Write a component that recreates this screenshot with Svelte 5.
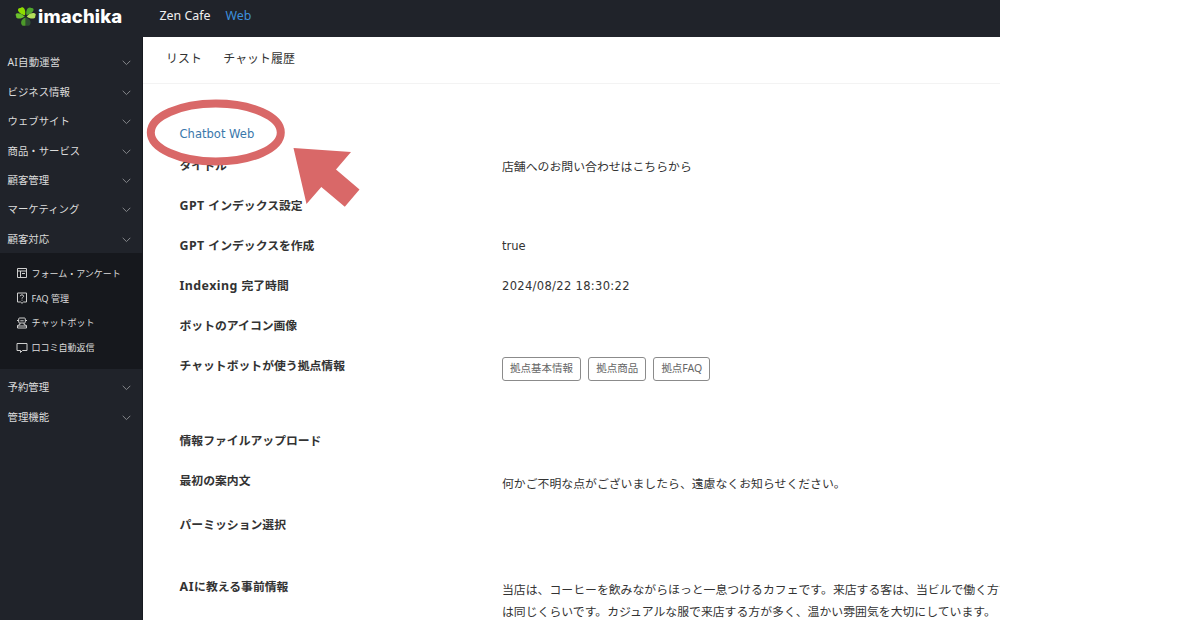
<script>
  const menu = [
    'AI自動運営', 'ビジネス情報', 'ウェブサイト', '商品・サービス',
    '顧客管理', 'マーケティング', '顧客対応'
  ];
  const submenu = [
    { icon: 'form', label: 'フォーム・アンケート' },
    { icon: 'faq', label: 'FAQ 管理' },
    { icon: 'bot', label: 'チャットボット' },
    { icon: 'review', label: '口コミ自動返信' }
  ];
  const lower = ['予約管理', '管理機能'];
  const rows = [
    { latin: '', label: 'タイトル', h: 40, value: '店舗へのお問い合わせはこちらから' },
    { latin: 'GPT ', label: 'インデックス設定', h: 40 },
    { latin: 'GPT ', label: 'インデックスを作成', h: 40, value: 'true', mono: true },
    { latin: 'Indexing ', label: '完了時間', h: 40, value: '2024/08/22 18:30:22', mono: true, wide: true },
    { latin: '', label: 'ボットのアイコン画像', h: 40 },
    { latin: '', label: 'チャットボットが使う拠点情報', h: 75, tags: ['拠点基本情報', '拠点商品', '拠点FAQ'] },
    { latin: '', label: '情報ファイルアップロード', h: 40 },
    { latin: '', label: '最初の案内文', h: 44, value: '何かご不明な点がございましたら、遠慮なくお知らせください。', low: true },
    { latin: '', label: 'パーミッション選択', h: 62 },
    {
      latin: 'AI', label: 'に教える事前情報', h: 44, low: true,
      value: '当店は、コーヒーを飲みながらほっと一息つけるカフェです。来店する客は、当ビルで働く方で\nは同じくらいです。カジュアルな服で来店する方が多く、温かい雰囲気を大切にしています。'
    }
  ];
</script>

{#snippet menuItem(label)}
  <li class="item">
    <span>{label}</span>
    <svg width="9" height="6" viewBox="0 0 9 6"><path d="M.7 .8 4.5 4.6 8.3 .8" /></svg>
  </li>
{/snippet}

<div class="app">
  <header>
    <div class="logo">
      <svg width="22" height="20" viewBox="0 0 22 20">
        <path fill="#8fdc00" d="M10 8.200C6.500 7.500 3.300 5.400 3 3.200 2.900 1.700 4 .7 5.500 1 6.700 -.2 8.600 .3 9.600 2.200c.8 1.700.9 3.800.4 6z" />
        <path fill="#4fa52d" d="M11.500 8C10.900 5.500 11.300 3 12.600 1.500 14 .1 15.600 .1 16.300 1 18 .7 19 1.800 18.500 3.300 18 5.500 15 7.400 11.500 8z" />
        <path fill="#6cc02e" d="M9.800 9.500C7 6.700 3.700 5.700 2 6.300 .5 6.900 .2 8.200 1.200 9 .7 10.400 1.700 11.500 3.300 11.500 6 11.600 8 10.900 9.800 9.500z" />
        <path fill="#b3e05a" d="M11.700 9.500C14 6.700 17.500 5.600 19.500 6.300 21 6.900 21.200 8.200 20.200 9 20.700 10.400 19.800 11.500 18.200 11.500 15.800 11.700 13.600 11.100 11.700 9.500z" />
        <path fill="#4c9a2a" d="M10.600 10.500V18.800H8.200C6.800 18.500 6 17 6.100 15.200 6.200 13 8 11.500 10.600 10.500z" />
        <path fill="#2f4d33" d="M11 10.500C14 11.500 15.700 13.300 15.600 15.500 15.600 17.300 14.800 18.500 13.400 18.800H11z" />
      </svg>
      <span>imachika</span>
    </div>
    <nav>
      <span class="shop">Zen Cafe</span>
      <span class="web">Web</span>
    </nav>
  </header>

  <div class="body">
    <aside>
      <ul>
        {#each menu as m}{@render menuItem(m)}{/each}
      </ul>
      <ul class="sub">
        {#each submenu as s}
          <li>
            <svg width="12" height="12" viewBox="0 0 12 12">
              {#if s.icon === 'form'}
                <path d="M1.500 1.500h9v9h-9zM1.500 4h9M4.500 4v6.500M6 6.500h3" />
              {:else if s.icon === 'faq'}
                <path d="M1.500 1h9v9H7.500L6 11.300 4.500 10h-3zM4.300 4.200C4.300 2.300 7.600 2.400 7.600 4.200 7.600 5.300 6 5.200 6 6.600M6 7.700v.9" />
              {:else if s.icon === 'bot'}
                <path d="M3.500 1h5Q9.300 1 9.300 2v3Q9.300 6 8.300 6H3.700Q2.700 6 2.700 5V2Q2.700 1 3.500 1zM2.700 3.500H1M9.300 3.500H11M4.300 3.800h3.400M4 6v1.500L1.500 8.500v2.500h9V8.500L8 7.500V6M1.500 9h9" />
              {:else}
                <path d="M1 1.500h10v7H6.500L4.500 10.500V8.500H1z" />
              {/if}
            </svg>
            <span>{s.label}</span>
          </li>
        {/each}
      </ul>
      <ul class="lower">
        {#each lower as m}{@render menuItem(m)}{/each}
      </ul>
    </aside>

    <main>
      <div class="tabs"><span>リスト</span><span>チャット履歴</span></div>
      <section>
        <a class="title">Chatbot Web</a>
        {#each rows as r}
          <div class="row" style="height:{r.h}px">
            <div class="label">{#if r.latin}<span class="latin" class:ai={r.latin === 'AI'}>{r.latin}</span>{/if}{r.label}</div>
            {#if r.tags}
              <div class="tags">
                {#each r.tags as t}<span>{t}</span>{/each}
              </div>
            {:else if r.value}
              <div class="value" class:mono={r.mono} class:wide={r.wide} class:low={r.low}>{r.value}</div>
            {/if}
          </div>
        {/each}
      </section>
    </main>
  </div>

  <svg class="marker" width="220" height="120" viewBox="145 95 220 120">
    <ellipse cx="215.800" cy="132.500" rx="65" ry="29" fill="none" stroke="#d96868" stroke-width="8" />
    <path fill="#d96868" d="M293.500 148 351 152 336 169.500 359.500 189.500 344.800 206.700 321.300 187 306.500 204z" />
  </svg>
</div>

<style>
  :global(body) { background: #fff; overflow: hidden; }
  .app {
    position: relative;
    width: 1000px;
    height: 620px;
    overflow: hidden;
    display: flex;
    flex-direction: column;
    font-family: "Noto Sans", "Noto Sans CJK JP", sans-serif;
    color: #333;
  }
  header { height: 37px; flex: none; display: flex; background: #20232a; }
  .logo { width: 144px; padding: 7px 0 0 15px; display: flex; box-sizing: border-box; }
  .logo svg { flex: none; }
  .logo span {
    margin-left: 1px;
    font: 800 18.500px/19px Inter, sans-serif;
    letter-spacing: .15px;
    color: #fff;
  }
  nav { display: flex; gap: 15px; padding-left: 15.500px; font-size: 12.400px; line-height: 32px; }
  .shop { color: #f0f0f0; }
  .web { color: #3d8fdc; }
  .body { flex: 1; display: flex; min-height: 0; }
  aside {
    width: 143px; flex: none; box-sizing: border-box;
    padding-top: 10.800px;
    background: #20232a;
    border-right: 1px solid #17191f;
    color: #dcdcdc;
  }
  ul { list-style: none; margin: 0; padding: 0; }
  .item {
    height: 29.350px; padding: 0 11px 0 7.500px;
    display: flex; align-items: center; justify-content: space-between;
    font-size: 10.400px; line-height: 20px;
  }
  .item:first-child span { letter-spacing: .2px; }
  .lower .item span { letter-spacing: 0; }
  .item svg { margin-top: 2px; fill: none; stroke: #85878b; stroke-width: 1; }
  .sub { height: 116px; box-sizing: border-box; padding: 8.400px 0 0 16px; background: #16181d; }
  .sub li { height: 24.700px; display: flex; align-items: center; gap: 3.500px; font-size: 9px; line-height: 18px; }
  .sub svg { fill: none; stroke: #cfcfcf; stroke-width: 1; margin-top: -1px; }
  .lower { padding-top: 3.500px; }
  main { flex: 1; min-width: 0; background: #fff; }
  .tabs {
    height: 47px; box-sizing: border-box; border-bottom: 1px solid #f3f3f3;
    display: flex; gap: 21.500px; padding: 0 23px;
    font-size: 11.950px; line-height: 44px; white-space: nowrap;
  }
  section { padding: 39px 0 0 36.500px; font-size: 11.830px; line-height: 20px; }
  .title {
    display: block; height: 32px;
    font-family: "DejaVu Sans", sans-serif; font-size: 11.550px; line-height: 23px;
    color: #3a78ab;
  }
  .row { display: grid; grid-template-columns: 322.500px 1fr; align-items: start; }
  .label { font-weight: 700; white-space: nowrap; }
  .latin { font-size: 12.400px; line-height: 16px; letter-spacing: .45px; white-space: pre; }
  .ai { letter-spacing: .6px; }
  .value { white-space: pre; overflow: hidden; font-size: 11.870px; line-height: 22px; }
  .low { margin-top: 1.500px; }
  .mono { font-family: "DejaVu Sans", sans-serif; font-size: 11.500px; line-height: 20px; margin-top: 1px; }
  .wide { letter-spacing: .33px; }
  .tags { display: flex; gap: 7.200px; margin-top: 2px; }
  .tags span {
    box-sizing: border-box; height: 24px; padding: 0 7px;
    border: 1px solid #8b8b8b; border-radius: 3px;
    font-size: 10.500px; line-height: 21px; color: #666;
  }
  .marker { position: absolute; left: 145px; top: 95px; }
</style>
